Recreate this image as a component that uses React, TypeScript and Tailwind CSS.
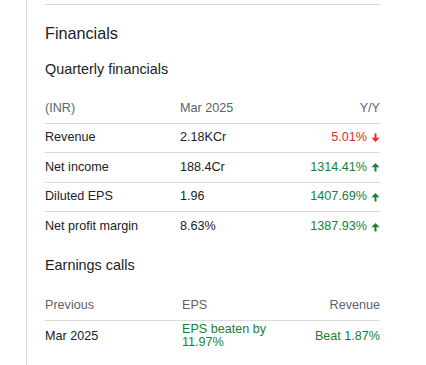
const rows = [
    { label: 'Revenue', value: '2.18KCr', change: '5.01%', up: false },
    { label: 'Net income', value: '188.4Cr', change: '1314.41%', up: true },
    { label: 'Diluted EPS', value: '1.96', change: '1407.69%', up: true },
    { label: 'Net profit margin', value: '8.63%', change: '1387.93%', up: true },
];

function Arrow({ up }: { up: boolean }) {
    return (
        <svg
            viewBox="0 0 10 10"
            className={up ? 'ml-[4px] h-[10px] w-[9px] fill-[#188038]' : 'ml-[4px] h-[10px] w-[9px] fill-[#d93025]'}
        >
            {up ? (
                <path d="M5 0.5L9.5 5.2H6.1V10H3.9V5.2H0.5Z" />
            ) : (
                <path d="M5 9.5L9.5 4.8H6.1V0H3.9V4.8H0.5Z" />
            )}
        </svg>
    );
}

export default function App() {
    return (
        <div className="flex h-[365px] w-[426px] bg-white font-['Liberation_Sans',Arial,sans-serif] text-[#202124]">
            <div className="ml-[26px] h-full border-l border-[#dadce0] pl-[18px]">
                <div className="w-[335px] pt-[4px]">
                    <div className="h-px bg-[#dadce0]" />
                    <h2 className="mt-[18px] text-[16.2px] leading-[20px]">Financials</h2>
                    <h3 className="mt-[16px] text-[14.4px] leading-[20px]">Quarterly financials</h3>

                    <div className="mt-[15px] text-[12.6px]">
                        <div className="grid h-[29.6px] grid-cols-[135px_1fr_auto] items-center border-b border-[#dadce0] text-[#5f6368]">
                            <span>(INR)</span>
                            <span>Mar 2025</span>
                            <span className="text-right">Y/Y</span>
                        </div>
                        {rows.map((row, i) => (
                            <div
                                key={row.label}
                                className={
                                    i < rows.length - 1
                                        ? 'grid h-[29.5px] grid-cols-[135px_1fr_auto] items-center border-b border-[#dadce0]'
                                        : 'grid h-[29.5px] grid-cols-[135px_1fr_auto] items-center'
                                }
                            >
                                <span>{row.label}</span>
                                <span>{row.value}</span>
                                <span
                                    className={
                                        row.up
                                            ? 'flex items-center justify-end text-[#188038]'
                                            : 'flex items-center justify-end text-[#d93025]'
                                    }
                                >
                                    {row.change}
                                    <Arrow up={row.up} />
                                </span>
                            </div>
                        ))}
                    </div>

                    <h3 className="mt-[13px] text-[14.4px] leading-[20px]">Earnings calls</h3>

                    <div className="mt-[16px] text-[12.6px]">
                        <div className="grid h-[30.6px] grid-cols-[137px_100px_1fr] items-center border-b border-[#dadce0] text-[#5f6368]">
                            <span>Previous</span>
                            <span>EPS</span>
                            <span className="text-right">Revenue</span>
                        </div>
                        <div className="grid h-[30px] grid-cols-[137px_100px_1fr] items-center">
                            <span>Mar 2025</span>
                            <span className="leading-[12.8px] text-[#188038]">EPS beaten by 11.97%</span>
                            <span className="text-right text-[#188038]">Beat 1.87%</span>
                        </div>
                    </div>
                </div>
            </div>
        </div>
    );
}
